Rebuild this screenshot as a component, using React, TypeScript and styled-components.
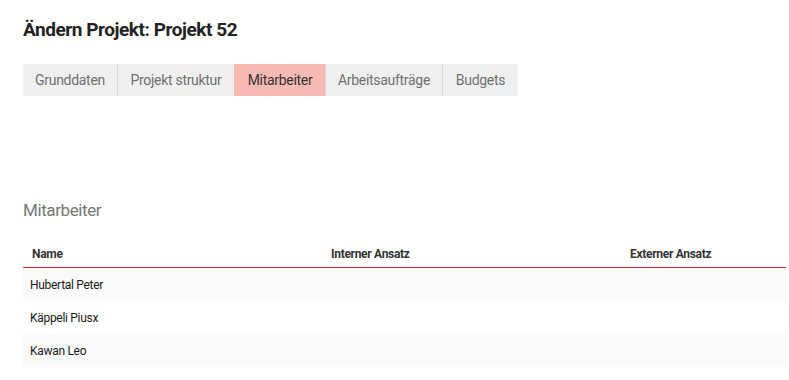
import React from 'react';
import styled, { createGlobalStyle } from 'styled-components';

const GlobalStyle = createGlobalStyle`
  *, *::before, *::after {
    box-sizing: border-box;
  }
  html, body {
    margin: 0;
    padding: 0;
    background: #fff;
  }
  body {
    font-family: 'Roboto', 'Liberation Sans', sans-serif;
    color: #222;
  }
`;

const Page = styled.div`
  padding: 18px 3px 0 23px;
`;

const Title = styled.h1`
  margin: 0;
  font-size: 19px;
  line-height: 24px;
  font-weight: 700;
  color: #222;
  letter-spacing: -0.45px;
`;

const Tabs = styled.div`
  display: inline-flex;
  margin-top: 22px;
  background: #efefef;
  border-radius: 3px;
  overflow: hidden;
`;

const Tab = styled.div<{ active?: boolean; width: number }>`
  width: ${(p) => p.width}px;
  height: 32px;
  display: flex;
  align-items: center;
  justify-content: center;
  font-size: 14px;
  letter-spacing: -0.3px;
  color: ${(p) => (p.active ? '#333' : '#6f6f6f')};
  background: ${(p) => (p.active ? '#f9b9b4' : 'transparent')};
  border-left: 1px solid ${(p) => (p.active ? '#f9b9b4' : '#d9d9d9')};
  &:first-child {
    border-left: none;
  }
`;

const SectionTitle = styled.h2`
  margin: 103px 0 0;
  font-size: 17px;
  line-height: 22px;
  font-weight: 400;
  color: #777;
  letter-spacing: -0.4px;
`;

const Table = styled.div`
  margin-top: 25px;
`;

const Row = styled.div<{ head?: boolean; striped?: boolean }>`
  display: grid;
  grid-template-columns: 299px 299px 1fr;
  height: ${(p) => (p.head ? 22 : 33)}px;
  align-items: center;
  background: ${(p) => (p.striped ? '#fafafa' : '#fff')};
  border-bottom: ${(p) => (p.head ? '1px solid #c62828' : 'none')};
`;

const Cell = styled.div<{ head?: boolean }>`
  padding-left: ${(p) => (p.head ? 9 : 7)}px;
  font-size: 12px;
  font-weight: ${(p) => (p.head ? 700 : 400)};
  color: ${(p) => (p.head ? '#333' : '#1a1a1a')};
  letter-spacing: -0.3px;
  align-self: ${(p) => (p.head ? 'start' : 'center')};
  line-height: 16px;
`;

const tabs = [
  { label: 'Grunddaten', width: 94 },
  { label: 'Projekt struktur', width: 117 },
  { label: 'Mitarbeiter', width: 91 },
  { label: 'Arbeitsaufträge', width: 117 },
  { label: 'Budgets', width: 76 },
];

const people = ['Hubertal Peter', 'Käppeli Piusx', 'Kawan Leo'];

export default function App() {
  return (
    <Page>
      <GlobalStyle />
      <Title>Ändern Projekt: Projekt 52</Title>
      <Tabs>
        {tabs.map((t) => (
          <Tab key={t.label} width={t.width} active={t.label === 'Mitarbeiter'}>
            {t.label}
          </Tab>
        ))}
      </Tabs>
      <SectionTitle>Mitarbeiter</SectionTitle>
      <Table>
        <Row head>
          <Cell head>Name</Cell>
          <Cell head>Interner Ansatz</Cell>
          <Cell head>Externer Ansatz</Cell>
        </Row>
        {people.map((name, i) => (
          <Row key={name} striped={i % 2 === 0}>
            <Cell>{name}</Cell>
            <Cell />
            <Cell />
          </Row>
        ))}
      </Table>
    </Page>
  );
}
